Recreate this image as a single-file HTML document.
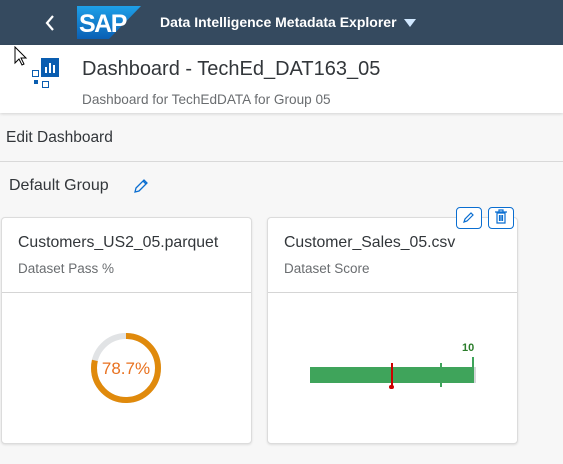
<!DOCTYPE html>
<html><head><style>
body{margin:0;width:563px;height:464px;background:#f7f7f7;font-family:"Liberation Sans",sans-serif;overflow:hidden;position:relative}
.a{position:absolute}
</style></head><body>
<div class="a" style="left:0;top:0;width:563px;height:45px;background:#354a5f"></div>
<svg class="a" style="left:44px;top:14px" width="12" height="18"><path d="M9 2L3 9l6 7" stroke="#fff" stroke-width="2.2" fill="none"/></svg>
<svg class="a" style="left:77px;top:6px" width="64" height="33"><defs><linearGradient id="g" x1="0" y1="0" x2="0" y2="1"><stop offset="0" stop-color="#1ea0e8"/><stop offset="1" stop-color="#0a5fb4"/></linearGradient></defs><path d="M0 0H64L32 33H0Z" fill="url(#g)"/><text x="2" y="26" font-family="Liberation Sans" font-weight="bold" font-size="25" fill="#fff" letter-spacing="-1.5">SAP</text></svg>
<div class="a" style="left:160px;top:14px;color:#fff;font-weight:bold;font-size:14px">Data Intelligence Metadata Explorer</div>
<svg class="a" style="left:404px;top:19px" width="12" height="8"><path d="M0 0h12L6 8z" fill="#d1e8ff"/></svg>
<div class="a" style="left:0;top:45px;width:563px;height:68px;background:#fff;box-shadow:0 1px 3px rgba(0,0,0,.15)"></div>
<svg class="a" style="left:14px;top:46px" width="14" height="22"><path d="M1 1v16l4-4 3 6 2-1-3-6h5z" fill="#fff" stroke="#000" stroke-width="1"/></svg>
<div class="a" style="left:41px;top:58px;width:18px;height:19px;background:#0a5db0"></div>
<div class="a" style="left:45px;top:67px;width:2px;height:6px;background:#fff"></div>
<div class="a" style="left:49px;top:63px;width:2px;height:10px;background:#fff"></div>
<div class="a" style="left:53px;top:65px;width:2px;height:8px;background:#fff"></div>
<div class="a" style="left:32px;top:70px;width:5px;height:5px;border:1.3px solid #0a5db0"></div>
<div class="a" style="left:34px;top:80px;width:4px;height:4px;background:#0a5db0"></div>
<div class="a" style="left:42px;top:81px;width:5px;height:5px;border:1.3px solid #0a5db0"></div>
<div class="a" style="left:82px;top:58px;font-size:20px;color:#32363a">Dashboard - TechEd_DAT163_05</div>
<div class="a" style="left:82px;top:92px;font-size:13.6px;color:#6a6d70">Dashboard for TechEdDATA for Group 05</div>
<div class="a" style="left:6px;top:129px;font-size:15.5px;color:#32363a">Edit Dashboard</div>
<div class="a" style="left:0;top:161px;width:563px;height:1px;background:#d9d9d9"></div>
<div class="a" style="left:9px;top:177px;font-size:16px;color:#32363a">Default Group</div>
<svg class="a" style="left:133px;top:178px" width="16" height="16"><path d="M2 14l1-4 8-8 3 3-8 8z M10 3l3 3" stroke="#0a6ed1" stroke-width="1.3" fill="none"/></svg>

<div class="a" style="left:1px;top:217px;width:249px;height:225px;background:#fff;border:1px solid #dcdcdc;border-radius:4px;box-shadow:0 1px 2px rgba(0,0,0,.1)"></div>
<div class="a" style="left:2px;top:292px;width:249px;height:1px;background:#d5d5d5"></div>
<div class="a" style="left:18px;top:234px;font-size:15.8px;color:#32363a">Customers_US2_05.parquet</div>
<div class="a" style="left:18px;top:261px;font-size:13.5px;color:#6a6d70">Dataset Pass %</div>
<svg class="a" style="left:90px;top:332px" width="72" height="72"><circle cx="36" cy="36" r="32" fill="none" stroke="#e1e3e5" stroke-width="6"/><circle cx="36" cy="36" r="32" fill="none" stroke="#e08a0c" stroke-width="6" stroke-dasharray="158.2 300" transform="rotate(-90 36 36)"/><text x="36" y="42" text-anchor="middle" font-family="Liberation Sans" font-size="17" fill="#e8711f">78.7%</text></svg>

<div class="a" style="left:267px;top:217px;width:249px;height:225px;background:#fff;border:1px solid #dcdcdc;border-radius:4px;box-shadow:0 1px 2px rgba(0,0,0,.1)"></div>
<div class="a" style="left:268px;top:292px;width:249px;height:1px;background:#d5d5d5"></div>
<div class="a" style="left:284px;top:234px;font-size:15.8px;color:#32363a">Customer_Sales_05.csv</div>
<div class="a" style="left:284px;top:261px;font-size:13.5px;color:#6a6d70">Dataset Score</div>
<div class="a" style="left:456px;top:207px;width:24px;height:20px;border:1px solid #0a6ed1;border-radius:4px;background:#fff"></div>
<svg class="a" style="left:462px;top:210px" width="14" height="14"><path d="M2 12l1-3 6-6 2 2-6 6z" stroke="#0a6ed1" stroke-width="1.2" fill="none"/></svg>
<div class="a" style="left:488px;top:207px;width:24px;height:20px;border:1px solid #0a6ed1;border-radius:4px;background:#fff"></div>
<svg class="a" style="left:494px;top:209px" width="14" height="16"><path d="M1 3h12M5 3V1h4v2M3 4h8v10H3z M5.5 6v6M7 6v6M8.5 6v6" stroke="#0a6ed1" stroke-width="1.2" fill="none"/></svg>
<div class="a" style="left:310px;top:367px;width:164px;height:16px;background:#3fa45b"></div>
<div class="a" style="left:474px;top:367px;width:2px;height:16px;background:#d5d7d9"></div>
<div class="a" style="left:472px;top:357px;width:2px;height:26px;background:#3fa45b"></div>
<div class="a" style="left:440px;top:363px;width:2px;height:24px;background:#3fa45b"></div>
<div class="a" style="left:391px;top:363px;width:2px;height:24px;background:#c00"></div>
<div class="a" style="left:389px;top:385px;width:5px;height:4px;background:#c00;border-radius:2px"></div>
<div class="a" style="left:462px;top:342px;font-size:11px;font-weight:bold;color:#2b7d2b">10</div>
</body></html>
